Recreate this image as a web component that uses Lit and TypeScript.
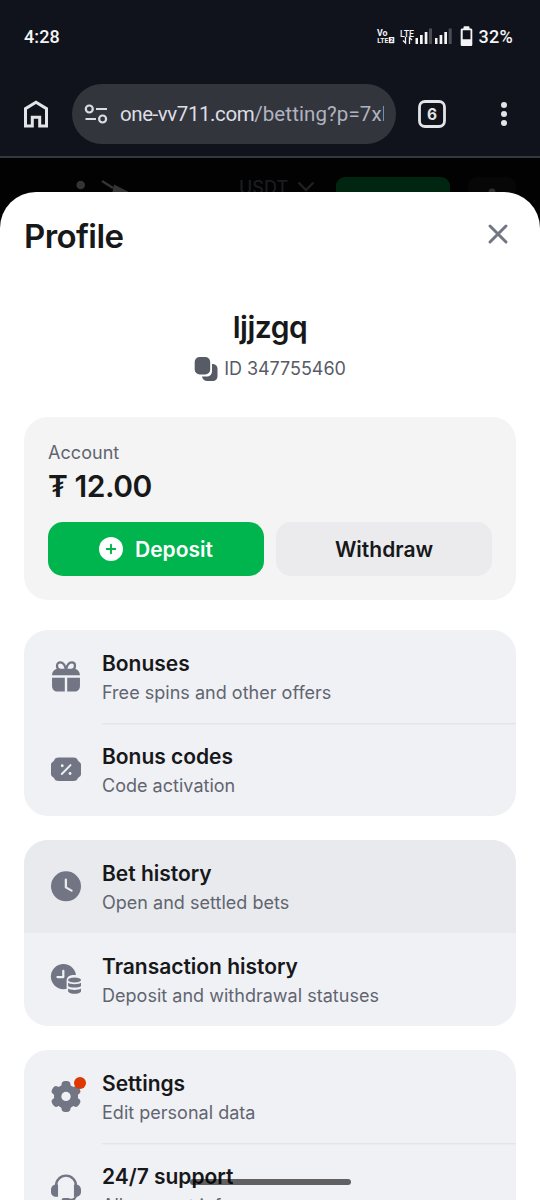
import { LitElement, html, css, svg, nothing } from "lit";
import { customElement, property } from "lit/decorators.js";

const icons: Record<string, unknown> = {
  gift: svg`
    <path d="M12 8C11.400 4.600 9.900 2.900 8.200 2.900 6.900 2.900 6 3.800 6 5.100 6 6.500 6.900 7.700 8.200 8M12 8c.6-3.400 2.100-5.100 3.800-5.100 1.300 0 2.200.9 2.200 2.200 0 1.400-.9 2.600-2.200 2.900" fill="none" stroke="currentColor" stroke-width="1.500"/>
    <path d="M2.700 11.500C2.700 9.100 4.300 7.100 6.700 7.100h10.600c2.400 0 4 2 4 4.400zM2.700 13.100h8.500v9.300H6.400c-2.200 0-3.700-1.500-3.700-3.700zM12.800 13.100h8.500v5.600c0 2.200-1.500 3.700-3.700 3.700h-4.800z"/>`,
  coupon: svg`
    <path d="M7 4.400h10c1.400 0 2.300.5 2.700 1.500.3.700.6 1 1.300 1.400.7.500 1 1.100 1 2v5.800c0 .9-.3 1.500-1 2-.7.400-1 .7-1.300 1.400-.4 1-1.300 1.500-2.700 1.500H7c-1.400 0-2.300-.5-2.700-1.500-.3-.7-.6-1-1.300-1.400-.7-.5-1-1.100-1-2V9.300c0-.9.3-1.500 1-2 .7-.4 1-.7 1.300-1.400.4-1 1.300-1.500 2.700-1.500z"/>
    <path d="M9.200 15.300l5.800-5.900" stroke="#f0f1f5" stroke-width="1.300" stroke-linecap="round"/>
    <circle cx="9.500" cy="9.800" r=".95" fill="#f0f1f5"/><circle cx="14.700" cy="15" r=".95" fill="#f0f1f5"/>`,
  clock: svg`
    <circle cx="12" cy="12.200" r="10"/>
    <path d="M11.900 7.700v5.200l3.800 2.200" fill="none" stroke="#e9eaee" stroke-width="1.500" stroke-linecap="round" stroke-linejoin="round"/>`,
  transactions: svg`
    <circle cx="10.300" cy="10.400" r="8.400"/>
    <path d="M10.200 6.500v4.200H6.300" fill="none" stroke="#f0f1f5" stroke-width="1.500" stroke-linecap="round" stroke-linejoin="round"/>
    <path d="M12.400 13c0-2.500 2-3.700 5.300-3.700S23 10.500 23 13v10H12.400z" fill="#f0f1f5"/>
    <ellipse cx="17.700" cy="12.700" rx="4.300" ry="1.700"/>
    <path d="M13.400 14.500c1.800 1.300 6.800 1.300 8.600 0v2.100c-1 1.500-7.600 1.500-8.600 0zM13.400 18.400c1.800 1.300 6.800 1.300 8.600 0v1.900c-1 2.100-7.600 2.100-8.600 0z"/>`,
  gear: svg`
    <circle cx="12" cy="12.300" r="8"/>
    <rect x="9" y="2" width="6" height="20.600" rx="2.500"/>
    <rect x="9" y="2" width="6" height="20.600" rx="2.500" transform="rotate(60 12 12.300)"/>
    <rect x="9" y="2" width="6" height="20.600" rx="2.500" transform="rotate(120 12 12.300)"/>
    <circle cx="12" cy="12.300" r="3.100" fill="#f0f1f5"/>`,
  headset: svg`
    <path d="M5.300 11.500v-1.700a6.700 6.700 0 0 1 13.400 0v6c0 2-1.500 3.500-3.500 3.500h-1" fill="none" stroke="currentColor" stroke-width="1.500"/>
    <path d="M6.700 9v8.200H5.400C3.500 17.200 2 16 2 14v-1.500c0-2 1.500-3.500 3.400-3.500zM17.300 9v8.200h1.300c1.900 0 3.400-1.200 3.400-3.200v-1.500c0-2-1.500-3.500-3.400-3.500z"/>
    <rect x="9" y="18" width="6" height="3" rx="1.500"/>`,
};

@customElement("menu-row")
class MenuRow extends LitElement {
  @property() icon = "";
  @property() label = "";
  @property() note = "";
  @property({ type: Boolean }) dot = false;
  @property({ type: Boolean }) line = false;

  static styles = css`
    :host { display: grid; grid-template-columns: 36px 1fr; column-gap: 18px; height: 93px; padding-left: 24px; box-sizing: border-box; }
    :host([active]) { background: #e9eaee; }
    .icon { position: relative; width: 36px; height: 36px; margin-top: 28px; color: #717584; }
    svg { display: block; width: 36px; height: 36px; fill: currentColor; }
    .dot { position: absolute; width: 12px; height: 12px; border-radius: 50%; background: #de3700; top: -1px; right: -1.600px; }
    .text { box-sizing: border-box; height: 93px; padding-top: 19px; }
    .text.line { box-shadow: 0 1px #e4e5e9, 0 2px #ebecf0; }
    .label { font-size: 21px; line-height: 30px; font-weight: 600; color: #17181a; letter-spacing: -0.02px; }
    .note { font-size: 18px; line-height: 24px; margin-top: 2px; color: #616570; letter-spacing: 0.02px; white-space: nowrap; }
  `;

  render() {
    return html`
      <div class="icon"><svg viewBox="0 0 24 24">${icons[this.icon]}</svg>${this.dot ? html`<span class="dot"></span>` : nothing}</div>
      <div class="text ${this.line ? "line" : ""}">
        <div class="label">${this.label}</div>
        <div class="note">${this.note}</div>
      </div>`;
  }
}

@customElement("app-root")
class AppRoot extends LitElement {
  static styles = css`
    :host { display: flex; flex-direction: column; position: relative; width: 540px; height: 1200px; overflow: hidden; background: #020203; font-family: Inter, "Open Sans", sans-serif; color: #17181a; }
    svg { display: block; }
    .status { display: flex; justify-content: space-between; align-items: center; box-sizing: border-box; height: 72px; padding: 1px 27px 0 24px; background: #10131b; color: #f4f4f6; font: 500 18px/24px Roboto, sans-serif; letter-spacing: 0.1px; flex: none; }
    .signals { display: flex; align-items: center; letter-spacing: 0; }
    .signals .level { letter-spacing: 0.3px; }
    .toolbar { display: flex; align-items: center; box-sizing: border-box; height: 86px; padding: 0 24px; background: #10131b; border-bottom: 2px solid #363844; color: #e3e4e8; flex: none; }
    .url { display: flex; align-items: center; box-sizing: border-box; width: 324px; height: 60px; margin: 0 22px 0 24px; padding: 0 12px; border-radius: 30px; background: #33353d; }
    .address { width: 264px; margin-left: 12px; overflow: hidden; white-space: nowrap; color: #b0b3bf; font: 400 20.500px/30px Roboto, sans-serif; letter-spacing: 0.1px; }
    .host { color: #dddee5; letter-spacing: -0.43px; }
    .more { margin-left: auto; margin-right: 9px; }
    .behind { display: flex; align-items: flex-start; height: 40px; padding-top: 19px; box-sizing: border-box; flex: none; }
    .logo { margin-left: 76px; margin-right: 111px; }
    .currency { font-size: 18px; line-height: 21px; font-weight: 500; color: #1b1c20; letter-spacing: 0; }
    .chev { margin: 4px 21px 0 9px; }
    .green { width: 114px; height: 22px; border-radius: 9px 9px 0 0; background: #002611; }
    .user { width: 48px; height: 22px; margin-left: 18px; border-radius: 9px 9px 0 0; background: #070708; }
    .sheet { position: absolute; top: 192px; left: 0; right: 0; bottom: 0; box-sizing: border-box; padding: 0 24px; border-radius: 36px 36px 0 0; background: #fff; overflow: hidden; }
    .head { display: flex; align-items: center; justify-content: space-between; height: 84px; padding-right: 6px; }
    .title { font-size: 33px; line-height: 42px; font-weight: 600; padding-top: 3px; letter-spacing: -0.6px; }
    .name { margin-top: 33px; text-align: center; font-size: 30px; line-height: 36px; font-weight: 600; letter-spacing: -0.5px; }
    .id { display: flex; align-items: center; justify-content: center; gap: 6px; height: 24px; margin-top: 12px; font-size: 18px; color: #575b66; letter-spacing: -0.05px; }
    .id span { margin-top: -1px; }
    .account { box-sizing: border-box; height: 183px; margin-top: 36px; padding: 24px; border-radius: 24px; background: #f4f4f4; }
    .caption { font-size: 18px; line-height: 24px; color: #616570; letter-spacing: 0.05px; }
    .balance { font-size: 30px; line-height: 36px; font-weight: 600; margin-top: 3px; letter-spacing: -0.45px; }
    .actions { display: grid; grid-template-columns: 1fr 1fr; gap: 12px; margin-top: 18px; }
    .btn { display: flex; align-items: center; justify-content: center; gap: 12px; height: 54px; border-radius: 15px; background: #ebebed; font-size: 21px; font-weight: 600; }
    .btn.go { background: #00b44e; color: #fff; }
    .group { margin-top: 24px; border-radius: 24px; background: #f0f1f5; overflow: hidden; }
    .group.first { margin-top: 30px; }
    .homebar { position: absolute; left: 190px; top: 1179px; width: 161px; height: 6px; border-radius: 3px; background: rgba(0, 0, 0, 0.6); }
  `;

  render() {
    return html`
      <div class="status">
        <span>4:28</span>
        <div class="signals">
          <svg width="102" height="24" viewBox="376 25 102 24" fill="#f4f4f6">
            <g font-family="Roboto" font-weight="700">
              <text x="377" y="35.500" font-size="8.500" textLength="10.500" lengthAdjust="spacingAndGlyphs">Vo</text>
              <text x="377.300" y="43" font-size="8" textLength="11" lengthAdjust="spacingAndGlyphs">LTE</text>
              <rect x="388.800" y="37" width="5.500" height="6.200"/>
              <text x="390" y="42.200" font-size="5.500" fill="#10131b">2</text>
              <text x="400" y="36.500" font-size="9.800" font-weight="500" textLength="14" lengthAdjust="spacingAndGlyphs">LTE</text>
            </g>
            <path d="M405.500 37v6l-2.500-2.500M409.500 44v-6.500l2.500 2.500" fill="none" stroke="#f4f4f6" stroke-width="1.300"/>
            <path d="M415.500 38h2.500v6h-2.500zM420 35h2.700v9H420zM424.700 32h2.700v12h-2.700zM435 38h2.500v6H435zM439.600 35h2.700v9h-2.700zM444.300 32h2.700v12h-2.700z"/>
            <path d="M429 28.500h3V44h-3zM448.700 28.500h3V44h-3z" fill="#4a4c54"/>
            <path fill-rule="evenodd" d="M463.500 28.500v-1.200c0-.7.400-1.100 1.100-1.100h3.800c.7 0 1.100.4 1.100 1.100v1.200h1.200c1 0 1.600.6 1.600 1.600v14.300c0 1-.6 1.600-1.600 1.600h-8.400c-1 0-1.600-.6-1.600-1.600V30.100c0-1 .6-1.600 1.600-1.600zM462.700 30.200v9h7.800v-9z"/>
          </svg>
          <span class="level">32%</span>
        </div>
      </div>
      <div class="toolbar">
        <svg width="24" height="30" viewBox="24 99 24 30" fill="none" stroke="#e3e4e8" stroke-width="3"><path d="M25.500 126V108.700L36 102.300l10.500 6.400V126H39.700v-8.700h-7.400V126z"/></svg>
        <div class="url">
          <svg width="24" height="24" viewBox="84 102 24 24" fill="none" stroke="#dcdde4" stroke-width="2.200"><circle cx="89.300" cy="109" r="3.500"/><path d="M96 109h11M85.500 119h10.500"/><circle cx="102.600" cy="119" r="3.500"/></svg>
          <div class="address"><span class="host">one-vv711.com</span>/betting?p=7xl</div>
        </div>
        <svg width="28" height="28" viewBox="0 0 28 28"><rect x="1.500" y="1.500" width="25" height="25" rx="5.500" fill="none" stroke="#e3e4e8" stroke-width="2.800"/><text x="14" y="19.700" text-anchor="middle" font-family="Inter" font-size="15.500" font-weight="700" fill="#e3e4e8">6</text></svg>
        <svg class="more" width="6" height="26" viewBox="0 0 6 26" fill="#e3e4e8"><circle cx="3" cy="4" r="3"/><circle cx="3" cy="13" r="3"/><circle cx="3" cy="22" r="3"/></svg>
      </div>
      <div class="behind">
        <svg class="logo" width="52" height="16" viewBox="76 177 52 16"><circle cx="80.700" cy="185" r="4.300" fill="#343434"/><path d="M102 181l11 7" stroke="#343434" stroke-width="2.500"/><path d="M114 184.500l14 7V194h-16z" fill="#343434"/></svg>
        <span class="currency">USDT</span>
        <svg class="chev" width="18" height="12" viewBox="0 0 18 12"><path d="M1.500 1.500L9 9l7.500-7.500" fill="none" stroke="#202022" stroke-width="2.400"/></svg>
        <div class="green"></div>
        <div class="user"><svg width="48" height="22"><circle cx="24" cy="15" r="3.500" fill="#303033"/></svg></div>
      </div>
      <div class="sheet">
        <div class="head">
          <div class="title">Profile</div>
          <svg width="24" height="24" viewBox="0 0 24 24"><path d="M4 4l16 16M20 4L4 20" stroke="#717584" stroke-width="3" stroke-linecap="round"/></svg>
        </div>
        <div class="name">ljjzgq</div>
        <div class="id">
          <svg width="24" height="24" viewBox="0 0 24 24" fill="#575b66"><rect x=".7" y="0" width="15.500" height="17.500" rx="5"/><path d="M18 7c3.300 0 5.500 1.700 5.500 5v7c0 3-2 5-5 5h-5.200c-3 0-4.700-1.300-5.300-4.400h4.500c3.500 0 5.500-2 5.500-5.500z"/></svg>
          <span>ID 347755460</span>
        </div>
        <div class="account">
          <div class="caption">Account</div>
          <div class="balance">₮ 12.00</div>
          <div class="actions">
            <div class="btn go"><svg width="24" height="24" viewBox="0 0 24 24"><circle cx="12" cy="12" r="12" fill="#fff"/><path d="M12 7.700v8.600M7.700 12h8.600" stroke="#00b44e" stroke-width="1.900" stroke-linecap="round"/></svg><span>Deposit</span></div>
            <div class="btn"><span>Withdraw</span></div>
          </div>
        </div>
        <div class="group first">
          <menu-row icon="gift" label="Bonuses" note="Free spins and other offers" line></menu-row>
          <menu-row icon="coupon" label="Bonus codes" note="Code activation"></menu-row>
        </div>
        <div class="group">
          <menu-row active icon="clock" label="Bet history" note="Open and settled bets"></menu-row>
          <menu-row icon="transactions" label="Transaction history" note="Deposit and withdrawal statuses"></menu-row>
        </div>
        <div class="group">
          <menu-row icon="gear" label="Settings" note="Edit personal data" dot line></menu-row>
          <menu-row icon="headset" label="24/7 support" note="All support info"></menu-row>
        </div>
      </div>
      <div class="homebar"></div>`;
  }
}
